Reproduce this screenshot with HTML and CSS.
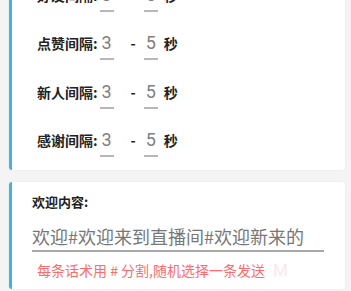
FILE: index.html
```html
<!DOCTYPE html>
<html lang="zh-CN">

<head>
    <meta charset="UTF-8">
    <meta name="viewport" content="width=device-width, initial-scale=1.0">
    <title>间隔设置</title>
    <link rel="stylesheet" href="styles.css">
</head>

<body>
    <div class="card intervals">
        <div class="row">
            <span class="label">好友间隔:</span>
            <span class="num">3</span>
            <span class="dash">-</span>
            <span class="num">5</span>
            <span class="unit">秒</span>
        </div>
        <div class="row">
            <span class="label">点赞间隔:</span>
            <span class="num">3</span>
            <span class="dash">-</span>
            <span class="num">5</span>
            <span class="unit">秒</span>
        </div>
        <div class="row">
            <span class="label">新人间隔:</span>
            <span class="num">3</span>
            <span class="dash">-</span>
            <span class="num">5</span>
            <span class="unit">秒</span>
        </div>
        <div class="row">
            <span class="label">感谢间隔:</span>
            <span class="num">3</span>
            <span class="dash">-</span>
            <span class="num">5</span>
            <span class="unit">秒</span>
        </div>
    </div>

    <div class="card welcome">
        <div class="title">欢迎内容:</div>
        <div class="input">欢迎#欢迎来到直播间#欢迎新来的</div>
        <div class="hint">每条话术用 # 分割,随机选择一条发送<span class="mark">M</span></div>
    </div>
</body>

</html>
```

FILE: styles.css
```css
body {
    margin: 0;
    padding: 0 6px 4px 9px;
    background-color: #f4f4f4;
    font-family: "Noto Sans CJK SC", "Noto Sans", sans-serif;
    color: #222;
}

.card {
    background-color: #fff;
    border-left: 3px solid #3bb6dc;
    border-radius: 3px;
    box-shadow: 0 0 2px rgba(0, 0, 0, 0.08);
}

.intervals {
    margin-top: -30px;
    padding: 11.5px 0 13px 25px;
}

.row {
    display: flex;
    align-items: flex-start;
    height: 30px;
    margin-bottom: 18.5px;
}

.row:last-child {
    margin-bottom: 0;
}

.label,
.dash,
.unit {
    font-size: 14px;
    font-weight: bold;
    line-height: 26px;
}

.label {
    margin-right: 2px;
}

.num {
    width: 14px;
    height: 26px;
    padding-bottom: 2px;
    border-bottom: 2px solid #b8b8b8;
    text-align: center;
    font-family: Roboto, "Noto Sans", sans-serif;
    font-size: 18px;
    line-height: 26px;
    color: #808080;
}

.dash {
    margin: 0 8px 0 17px;
}

.unit {
    margin-left: 6px;
}

.welcome {
    margin-top: 12px;
    padding: 10px 21px 9px 20px;
}

.title {
    font-size: 13px;
    font-weight: bold;
    line-height: 19px;
}

.input {
    margin-top: 11.5px;
    padding-bottom: 1px;
    border-bottom: 2px solid #a8a8a8;
    font-size: 18px;
    line-height: 26px;
    color: #777;
    white-space: nowrap;
}

.hint {
    margin-top: 8px;
    padding-left: 5px;
    font-size: 14px;
    line-height: 20px;
    color: #ff6b6b;
}

.mark {
    margin-left: 8px;
    font-family: Roboto, sans-serif;
    font-size: 17px;
    color: #fce6ee;
}
```
